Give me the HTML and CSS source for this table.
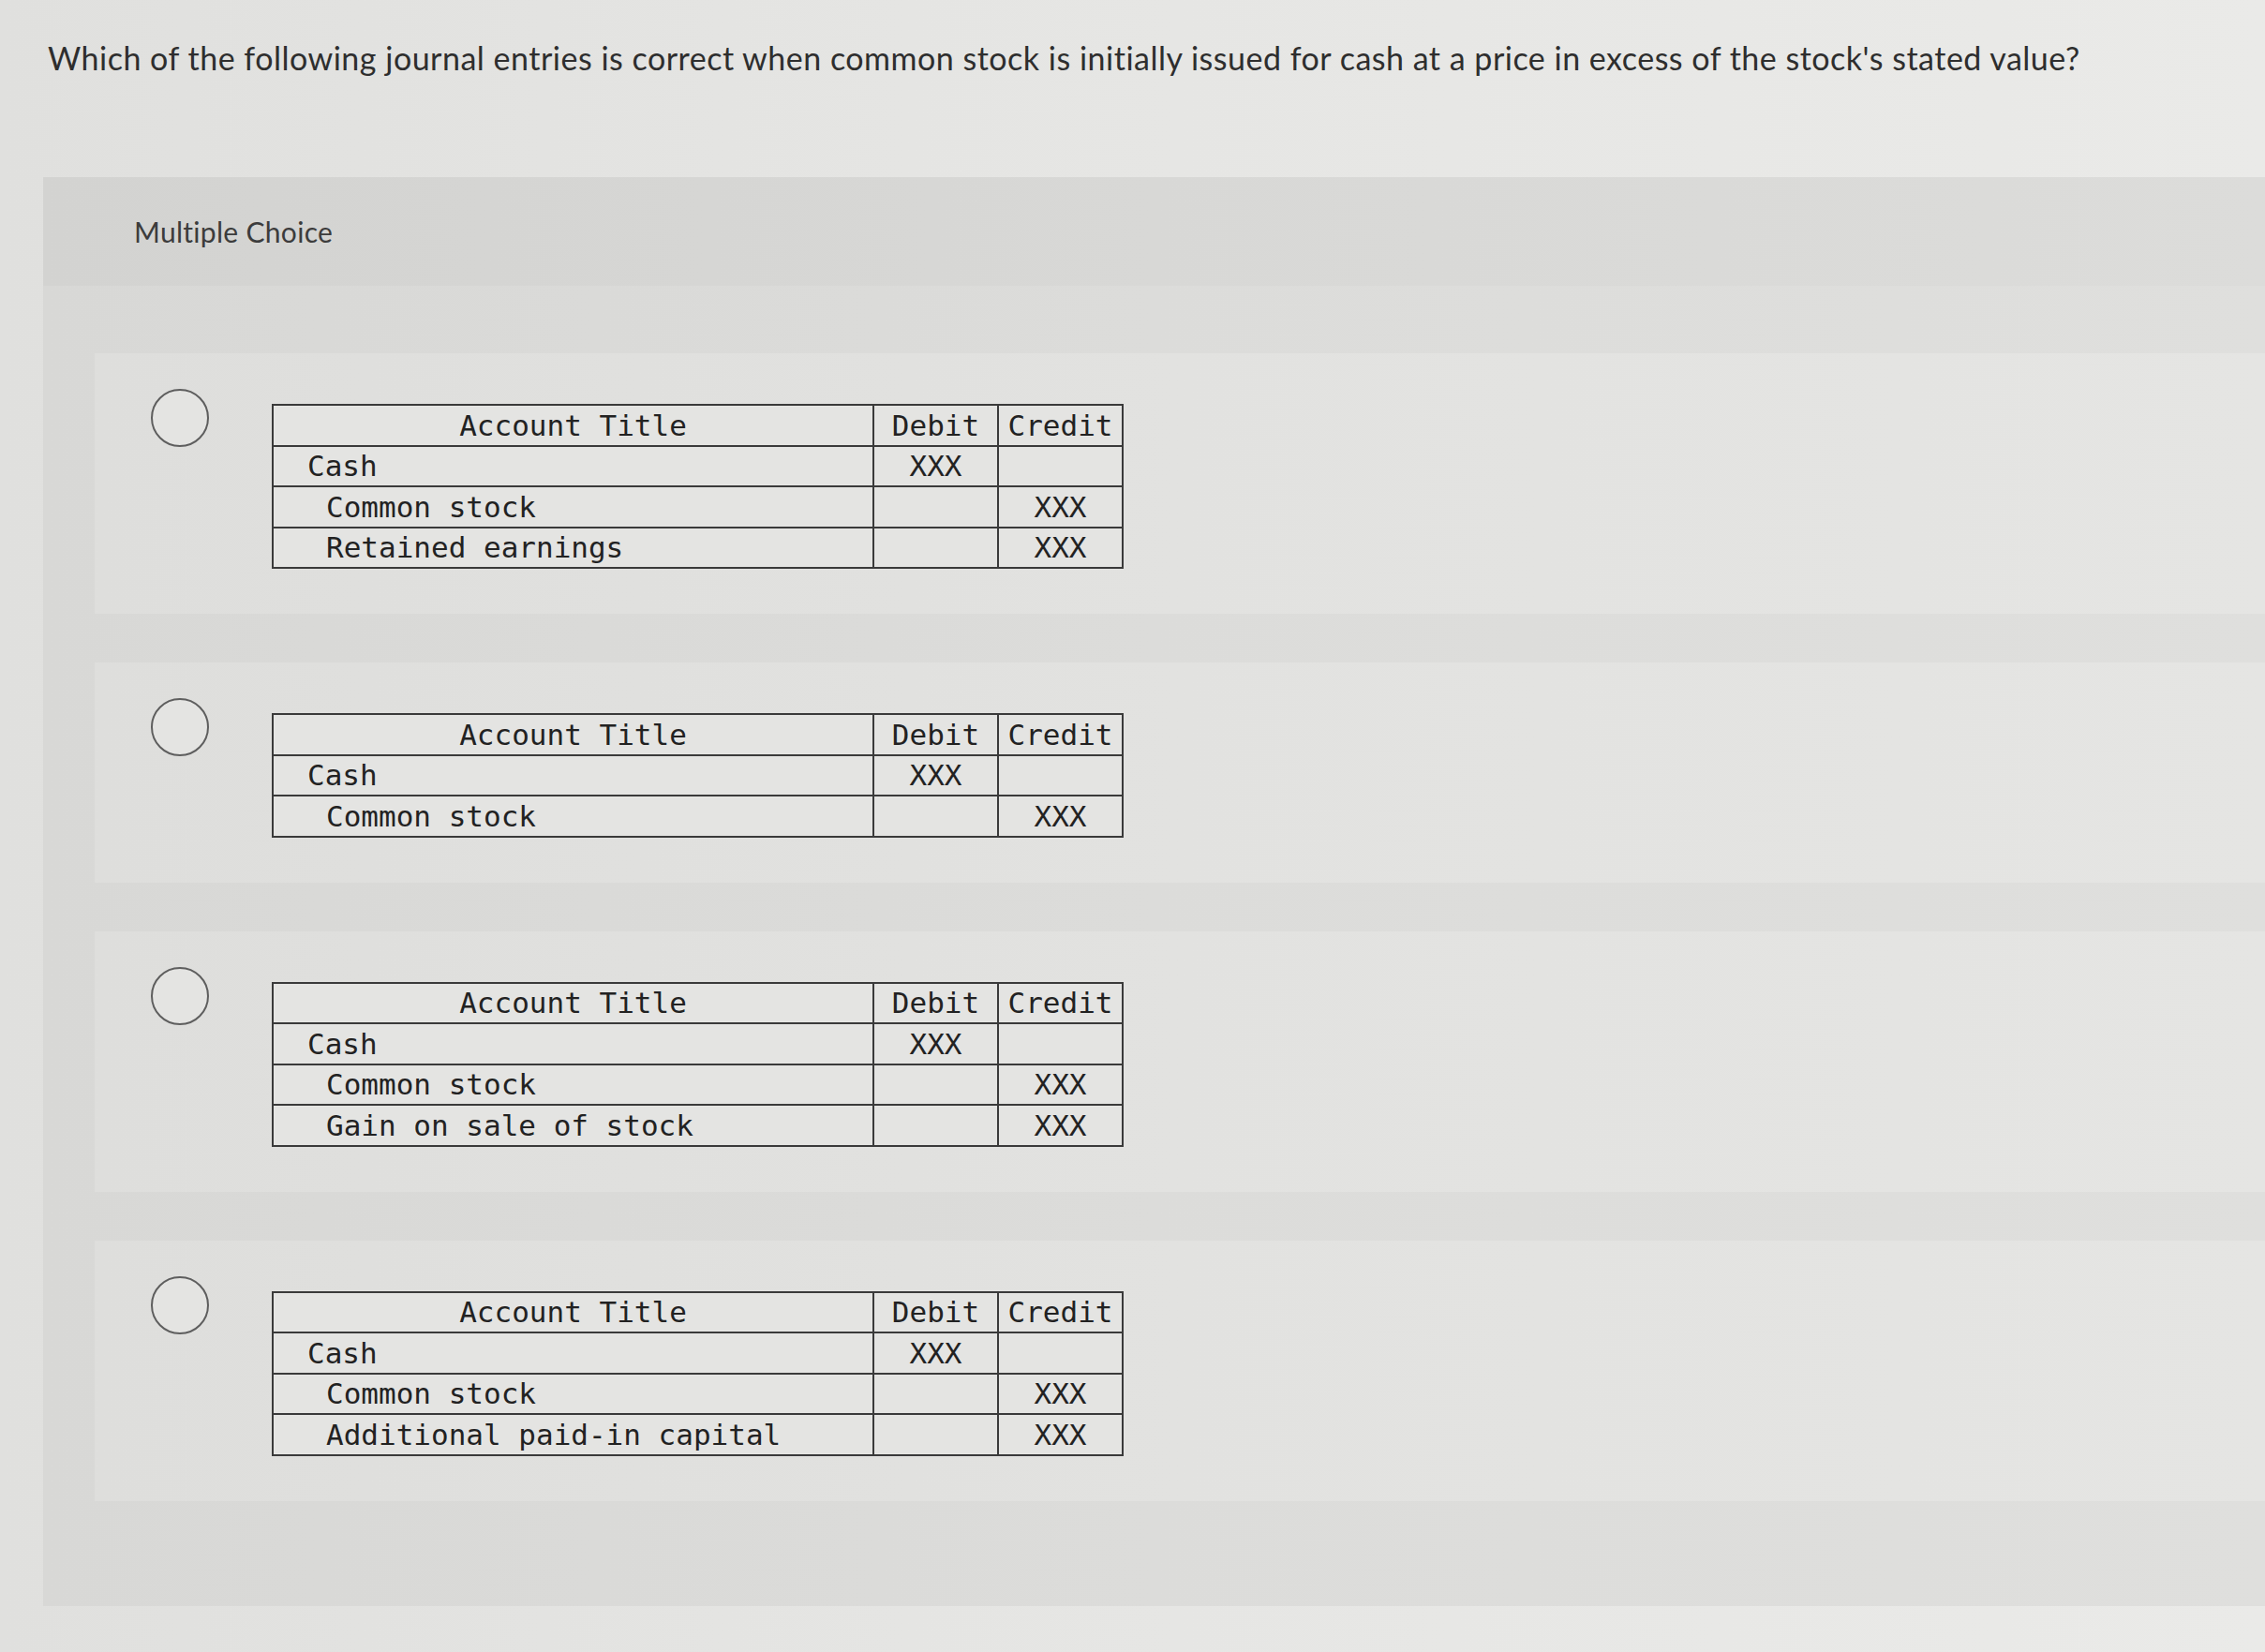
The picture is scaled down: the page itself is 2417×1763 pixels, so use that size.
FILE: index.html
```html
<!DOCTYPE html>
<html lang="en">
<head>
<meta charset="utf-8">
<title>Multiple Choice</title>
<link rel="stylesheet" href="styles.css">
</head>
<body>
<p class="question">Which of the following journal entries is correct when common stock is initially issued for cash at a price in excess of the stock's stated value?</p>
<section class="panel">
  <div class="panel-head">Multiple Choice</div>
  <div class="options">
    <div class="option">
      <span class="radio"></span>
      <table class="journal">
        <tr><th class="acct">Account Title</th><th class="num">Debit</th><th class="num">Credit</th></tr>
        <tr><td class="acct">Cash</td><td class="num">XXX</td><td class="num"></td></tr>
        <tr><td class="acct indent">Common stock</td><td class="num"></td><td class="num">XXX</td></tr>
        <tr><td class="acct indent">Retained earnings</td><td class="num"></td><td class="num">XXX</td></tr>
      </table>
    </div>
    <div class="option">
      <span class="radio"></span>
      <table class="journal">
        <tr><th class="acct">Account Title</th><th class="num">Debit</th><th class="num">Credit</th></tr>
        <tr><td class="acct">Cash</td><td class="num">XXX</td><td class="num"></td></tr>
        <tr><td class="acct indent">Common stock</td><td class="num"></td><td class="num">XXX</td></tr>
      </table>
    </div>
    <div class="option">
      <span class="radio"></span>
      <table class="journal">
        <tr><th class="acct">Account Title</th><th class="num">Debit</th><th class="num">Credit</th></tr>
        <tr><td class="acct">Cash</td><td class="num">XXX</td><td class="num"></td></tr>
        <tr><td class="acct indent">Common stock</td><td class="num"></td><td class="num">XXX</td></tr>
        <tr><td class="acct indent">Gain on sale of stock</td><td class="num"></td><td class="num">XXX</td></tr>
      </table>
    </div>
    <div class="option">
      <span class="radio"></span>
      <table class="journal">
        <tr><th class="acct">Account Title</th><th class="num">Debit</th><th class="num">Credit</th></tr>
        <tr><td class="acct">Cash</td><td class="num">XXX</td><td class="num"></td></tr>
        <tr><td class="acct indent">Common stock</td><td class="num"></td><td class="num">XXX</td></tr>
        <tr><td class="acct indent">Additional paid-in capital</td><td class="num"></td><td class="num">XXX</td></tr>
      </table>
    </div>
  </div>
</section>
</body>
</html>
```

FILE: styles.css
```css
html, body {
  margin: 0;
  padding: 0;
}
body {
  width: 2417px;
  min-height: 1763px;
  background: linear-gradient(90deg, #e0e0de 0%, #e5e5e3 40%, #eaeae8 100%);
  font-family: "Lato", "Liberation Sans", sans-serif;
  color: #333;
  overflow: hidden;
}
.question {
  margin: 42px 0 107px 51px;
  font-size: 34px;
  line-height: 40px;
  letter-spacing: 0.5px;
  color: #2e2e2e;
  white-space: nowrap;
}
.panel {
  margin-left: 46px;
  background: linear-gradient(90deg, #d8d8d6 0%, #dcdcda 50%, #dfdfdd 100%);
}
.panel-head {
  height: 116px;
  display: flex;
  align-items: center;
  padding-left: 97px;
  font-size: 30px;
  letter-spacing: 0.3px;
  color: #3c3c3c;
  background: linear-gradient(90deg, #d3d3d1 0%, #d8d8d6 50%, #dcdcda 100%);
}
.options {
  display: flex;
  flex-direction: column;
  gap: 52px;
  padding: 72px 0 112px 55px;
}
.option {
  display: flex;
  align-items: flex-start;
  padding: 38px 0 48px 60px;
  background: linear-gradient(90deg, #dededc 0%, #e2e2e0 50%, #e5e5e3 100%);
}
.radio {
  flex: none;
  width: 58px;
  height: 58px;
  border: 2.5px solid #5e5e5e;
  border-radius: 50%;
  background: #e4e4e2;
  margin-right: 67px;
}
.journal {
  margin-top: 16px;
  border-collapse: collapse;
  font-family: "DejaVu Sans Mono", "Liberation Mono", monospace;
  font-size: 31px;
  color: #222;
  background: #e4e4e2;
}
.journal th,
.journal td {
  border: 2px solid #3a3a3a;
  height: 43.5px;
  padding: 0;
  line-height: 36px;
  font-weight: normal;
  white-space: pre;
}
.journal .acct {
  width: 641px;
  box-sizing: border-box;
  text-align: left;
  padding-left: 36px;
}
.journal th.acct {
  text-align: center;
  padding-left: 0;
}
.journal .acct.indent {
  padding-left: 56px;
}
.journal .num {
  width: 133px;
  box-sizing: border-box;
  text-align: center;
}
```
